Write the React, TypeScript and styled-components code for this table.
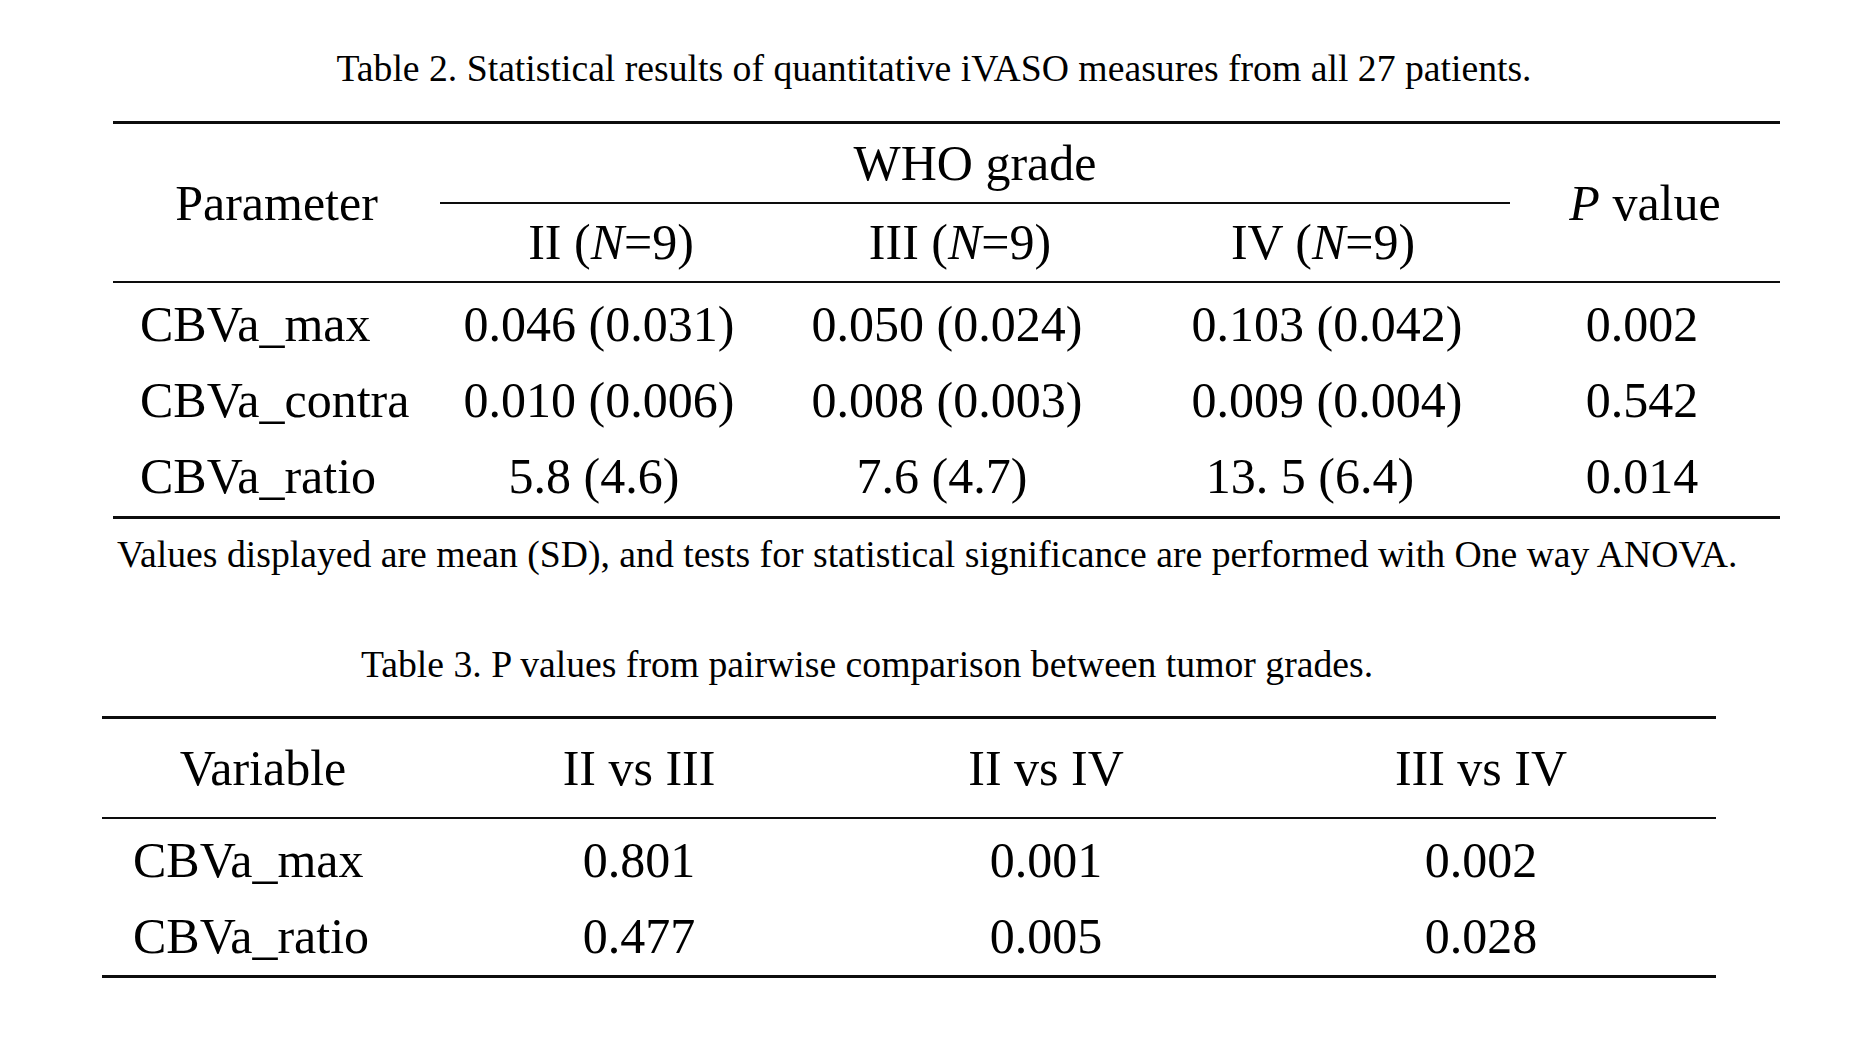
import styled, { createGlobalStyle } from "styled-components";

const GlobalStyle = createGlobalStyle`
  html, body {
    margin:0;
    padding:0;
    background:#fff;
  }
  body{
    font-family:"Liberation Serif","Times New Roman",serif;
    color:#000;
  }
`;

const Page = styled.div`
  width:1858px;
  min-height:1046px;
  display:flex;
  flex-direction:column;
  align-items:flex-start;
`;

const Caption = styled.div<{ $center: number; $top: number }>`
  width:1400px;
  margin-left:${({ $center }) => $center - 700}px;
  margin-top:${({ $top }) => $top}px;
  text-align:center;
  font-size:37.7px;
  line-height:44px;
  white-space:nowrap;
`;

const Note = styled.div`
  margin-left:117px;
  margin-top:13px;
  font-size:37.7px;
  line-height:44px;
  white-space:nowrap;
`;

const Table = styled.div<{ $cols: string; $left: number; $top: number; $head: string; $padBottom: number }>`
  display:grid;
  grid-template-columns:${({ $cols }) => $cols};
  grid-template-rows:${({ $head }) => $head};
  grid-auto-rows:76px;
  margin-left:${({ $left }) => $left}px;
  margin-top:${({ $top }) => $top}px;
  padding-bottom:${({ $padBottom }) => $padBottom}px;
  border-top:3px solid #0d0d0d;
  border-bottom:3px solid #0d0d0d;
  font-size:50px;
`;

// $shift nudges a centred value left (<0) or right (>0), as typeset in the source
const Cell = styled.div<{ $h?: number; $left?: number; $rows?: number; $span?: number; $shift?: number }>`
  line-height:${({ $h }) => $h ?? 76}px;
  text-align:${({ $left }) => ($left !== undefined ? "left" : "center")};
  padding-left:${({ $left, $shift = 0 }) => $left ?? Math.max(0, $shift * 2)}px;
  padding-right:${({ $shift = 0 }) => Math.max(0, -$shift * 2)}px;
  white-space:nowrap;
  ${({ $rows }) => ($rows ? `grid-row:span ${$rows}; align-self:center;` : "")}
  ${({ $span }) => ($span ? `grid-column:span ${$span};` : "")}
`;

const SubRule = styled.div`
  grid-column:span 3;
  background:#0d0d0d;
`;

const HeadRule = styled.div`
  grid-column:1 / -1;
  height:2px;
  background:#0d0d0d;
  margin-bottom:3px;
`;

const rows2 = [
  { v: ["CBVa_max", "0.046 (0.031)", "0.050 (0.024)", "0.103 (0.042)", "0.002"], s: [0, -6, -8, 2, -3] },
  { v: ["CBVa_contra", "0.010 (0.006)", "0.008 (0.003)", "0.009 (0.004)", "0.542"], s: [0, -6, -8, 2, -3] },
  { v: ["CBVa_ratio", "5.8 (4.6)", "7.6 (4.7)", "13. 5 (6.4)", "0.014"], s: [0, -11, -13, -15, -3] },
];

const rows3 = [
  ["CBVa_max", "0.801", "0.001", "0.002"],
  ["CBVa_ratio", "0.477", "0.005", "0.028"],
];

const shifts3 = [0, 0, 0, 4];

const Grade = ({ label, shift }: { label: string; shift: number }) => (
  <Cell $h={77} $shift={shift}>
    {label} (<i>N</i>=9)
  </Cell>
);

const App = () => {
  return (
    <Page>
      <GlobalStyle />

      <Caption $center={934} $top={46}>
        Table 2. Statistical results of quantitative iVASO measures from all 27 patients.
      </Caption>

      <Table
        $cols="327px 330px 370px 370px 270px"
        $head="78px 2px 77px 5px"
        $left={113}
        $top={31}
        $padBottom={2}
      >
        <Cell $h={56} $rows={3}>Parameter</Cell>
        <Cell $h={78} $span={3}>WHO grade</Cell>
        <Cell $h={56} $rows={3}>
          <i>P</i> value
        </Cell>
        <SubRule />
        <Grade label="II" shift={6} />
        <Grade label="III" shift={5} />
        <Grade label="IV" shift={-2} />
        <HeadRule />
        {rows2.map((row) =>
          row.v.map((v, i) => (
            <Cell key={row.v[0] + i} $left={i === 0 ? 27 : undefined} $shift={row.s[i]}>
              {v}
            </Cell>
          ))
        )}
      </Table>

      <Note>
        Values displayed are mean (SD), and tests for statistical significance are performed with One way ANOVA.
      </Note>

      <Caption $center={867} $top={66}>
        Table 3. P values from pairwise comparison between tumor grades.
      </Caption>

      <Table
        $cols="322px 430px 384px 478px"
        $head="98px 5px"
        $left={102}
        $top={30}
        $padBottom={1}
      >
        <Cell $h={98}>Variable</Cell>
        <Cell $h={98}>II vs III</Cell>
        <Cell $h={98}>II vs IV</Cell>
        <Cell $h={98} $shift={4}>III vs IV</Cell>
        <HeadRule />
        {rows3.map((row) =>
          row.map((v, i) => (
            <Cell key={row[0] + i} $left={i === 0 ? 31 : undefined} $shift={shifts3[i]}>
              {v}
            </Cell>
          ))
        )}
      </Table>
    </Page>
  );
};

export default App;
